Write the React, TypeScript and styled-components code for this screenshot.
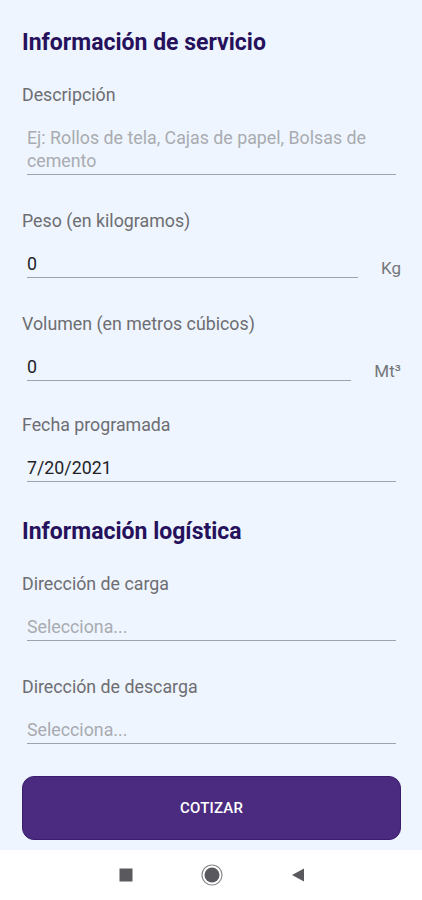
import React from "react";
import styled, { createGlobalStyle } from "styled-components";

const GlobalStyle = createGlobalStyle`
  html, body { margin: 0; padding: 0; }
  body { font-family: Roboto, "Noto Sans", Arial, sans-serif; background: #eef5fe; }
  * { box-sizing: border-box; }
`;

const Page = styled.div`
  width: 422px;
  height: 900px;
  display: flex;
  flex-direction: column;
  background: #eef5fe;
  overflow: hidden;
`;

const Content = styled.main`
  flex: 1;
  display: flex;
  flex-direction: column;
  padding: 30px 21px 0 22px;
`;

const SectionTitle = styled.h2<{ $top?: number }>`
  margin: ${(p) => p.$top ?? 0}px 0 0 0;
  font-size: 23px;
  line-height: 26px;
  font-weight: 700;
  color: #26115c;
  white-space: nowrap;
`;

const Label = styled.div<{ $top: number }>`
  margin-top: ${(p) => p.$top}px;
  font-size: 17.8px;
  line-height: 20px;
  color: #6d6d72;
  white-space: nowrap;
`;

const FieldRow = styled.div`
  display: flex;
  align-items: center;
  margin-top: 21px;
  height: 26px;
`;

const Field = styled.div<{ $placeholder?: boolean; $inRow?: boolean }>`
  flex: 1;
  margin: 0 ${(p) => (p.$inRow ? 0 : 5)}px 0 5px;
  padding-bottom: 2px;
  border-bottom: 1px solid #9ea2a9;
  font-size: 17.8px;
  line-height: 23px;
  color: ${(p) => (p.$placeholder ? "#a9abb0" : "#222226")};
`;

const MultiRow = styled(FieldRow)`
  height: auto;
`;

const Unit = styled.span`
  margin-left: 23px;
  padding-top: 6px;
  font-size: 17px;
  line-height: 18px;
  color: #75767a;
`;

const Button = styled.button`
  margin-top: 32px;
  height: 64px;
  width: 100%;
  border: 1px solid #3a1d6c;
  border-radius: 12px;
  background: #4b2b80;
  color: #ffffff;
  font-family: Roboto, Arial, sans-serif;
  font-size: 15px;
  font-weight: 500;
  letter-spacing: 0.2px;
`;

const NavBar = styled.nav`
  height: 50px;
  background: #ffffff;
  display: flex;
  align-items: center;
  justify-content: center;
  gap: 68px;
  margin-top: 10px;
  padding-left: 2px;
`;

const NavIcon = styled.svg`
  display: block;
`;

export default function App() {
  return (
    <Page>
      <GlobalStyle />
      <Content>
        <SectionTitle>Información de servicio</SectionTitle>
        <Label $top={29}>Descripción</Label>
        <MultiRow>
          <Field $placeholder>
            Ej: Rollos de tela, Cajas de papel, Bolsas de cemento
          </Field>
        </MultiRow>

        <Label $top={36}>Peso (en kilogramos)</Label>
        <FieldRow>
          <Field $inRow>0</Field>
          <Unit>Kg</Unit>
        </FieldRow>

        <Label $top={36}>Volumen (en metros cúbicos)</Label>
        <FieldRow>
          <Field $inRow>0</Field>
          <Unit>Mt³</Unit>
        </FieldRow>

        <Label $top={34}>Fecha programada</Label>
        <FieldRow>
          <Field>7/20/2021</Field>
        </FieldRow>

        <SectionTitle $top={37}>Información logística</SectionTitle>
        <Label $top={29}>Dirección de carga</Label>
        <FieldRow>
          <Field $placeholder>Selecciona...</Field>
        </FieldRow>

        <Label $top={36}>Dirección de descarga</Label>
        <FieldRow>
          <Field $placeholder>Selecciona...</Field>
        </FieldRow>

        <Button>COTIZAR</Button>
      </Content>
      <NavBar>
        <NavIcon width="14" height="14" viewBox="0 0 14 14">
          <rect x="0.5" y="0.5" width="13" height="13" fill="#5a5a5e" />
        </NavIcon>
        <NavIcon width="22" height="22" viewBox="0 0 22 22">
          <circle cx="11" cy="11" r="10" fill="none" stroke="#8a8a8e" strokeWidth="1.2" />
          <circle cx="11" cy="11" r="7.5" fill="#5a5a5e" />
        </NavIcon>
        <NavIcon width="14" height="14" viewBox="0 0 14 14">
          <polygon points="13,0.5 13,13.5 1,7" fill="#5a5a5e" />
        </NavIcon>
      </NavBar>
    </Page>
  );
}
